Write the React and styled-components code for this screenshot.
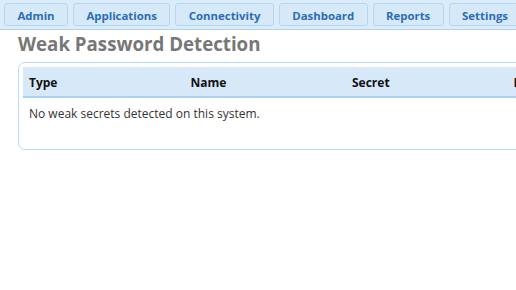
import styled, { createGlobalStyle } from 'styled-components';

const tabs = ['Admin', 'Applications', 'Connectivity', 'Dashboard', 'Reports', 'Settings'];
const columns = ['Type', 'Name', 'Secret', 'Detail'];

export default function App() {
  return (
    <>
      <GlobalStyle />
      <NavBar>
        {tabs.map((t) => (
          <NavButton key={t}>{t}</NavButton>
        ))}
      </NavBar>
      <Title>Weak Password Detection</Title>
      <Card>
        <Table>
          <thead>
            <tr>
              {columns.map((c) => (
                <Th key={c}>{c}</Th>
              ))}
            </tr>
          </thead>
          <tbody>
            <tr>
              <Td colSpan={columns.length}>No weak secrets detected on this system.</Td>
            </tr>
          </tbody>
        </Table>
      </Card>
    </>
  );
}

const GlobalStyle = createGlobalStyle`
  html, body {
    margin: 0;
    background: #ffffff;
    overflow: hidden;
    font-family: "Open Sans", "DejaVu Sans", sans-serif;
    font-size: 12px;
  }
`;

const NavBar = styled.div`
  display: flex;
  gap: 5px;
  padding: 3px 4px;
  height: 23px;
  background: #dcebf8;
  border-bottom: 1px solid #aed3f0;
  white-space: nowrap;
`;

const NavButton = styled.div`
  flex: none;
  box-sizing: border-box;
  height: 23px;
  padding: 1px 12.4px 0;
  display: flex;
  align-items: center;
  background: #d6e9f9;
  border: 1px solid #b3d6f2;
  border-radius: 3px;
  color: #2c6cb5;
  font-size: 11.4px;
  font-weight: 700;
`;

const Title = styled.h1`
  margin: 0 0 5px 18px;
  font-size: 18.7px;
  line-height: 27px;
  font-weight: 700;
  color: #777777;
`;

const Card = styled.div`
  width: 646px;
  margin-left: 18px;
  padding: 4px 4px 22px;
  border: 1px solid #b5daf5;
  border-radius: 7px;
`;

const Table = styled.table`
  width: 100%;
  border-collapse: collapse;
  table-layout: fixed;
`;

const Th = styled.th`
  text-align: left;
  padding: 7px 6px 5px;
  height: 30px;
  box-sizing: border-box;
  font-size: 12px;
  font-weight: 700;
  color: #111111;
  background: #d7e9f9;
  border-bottom: 2px solid #a9d2f2;
`;

const Td = styled.td`
  padding: 7px 6px 5px;
  font-size: 12px;
  color: #333333;
`;
